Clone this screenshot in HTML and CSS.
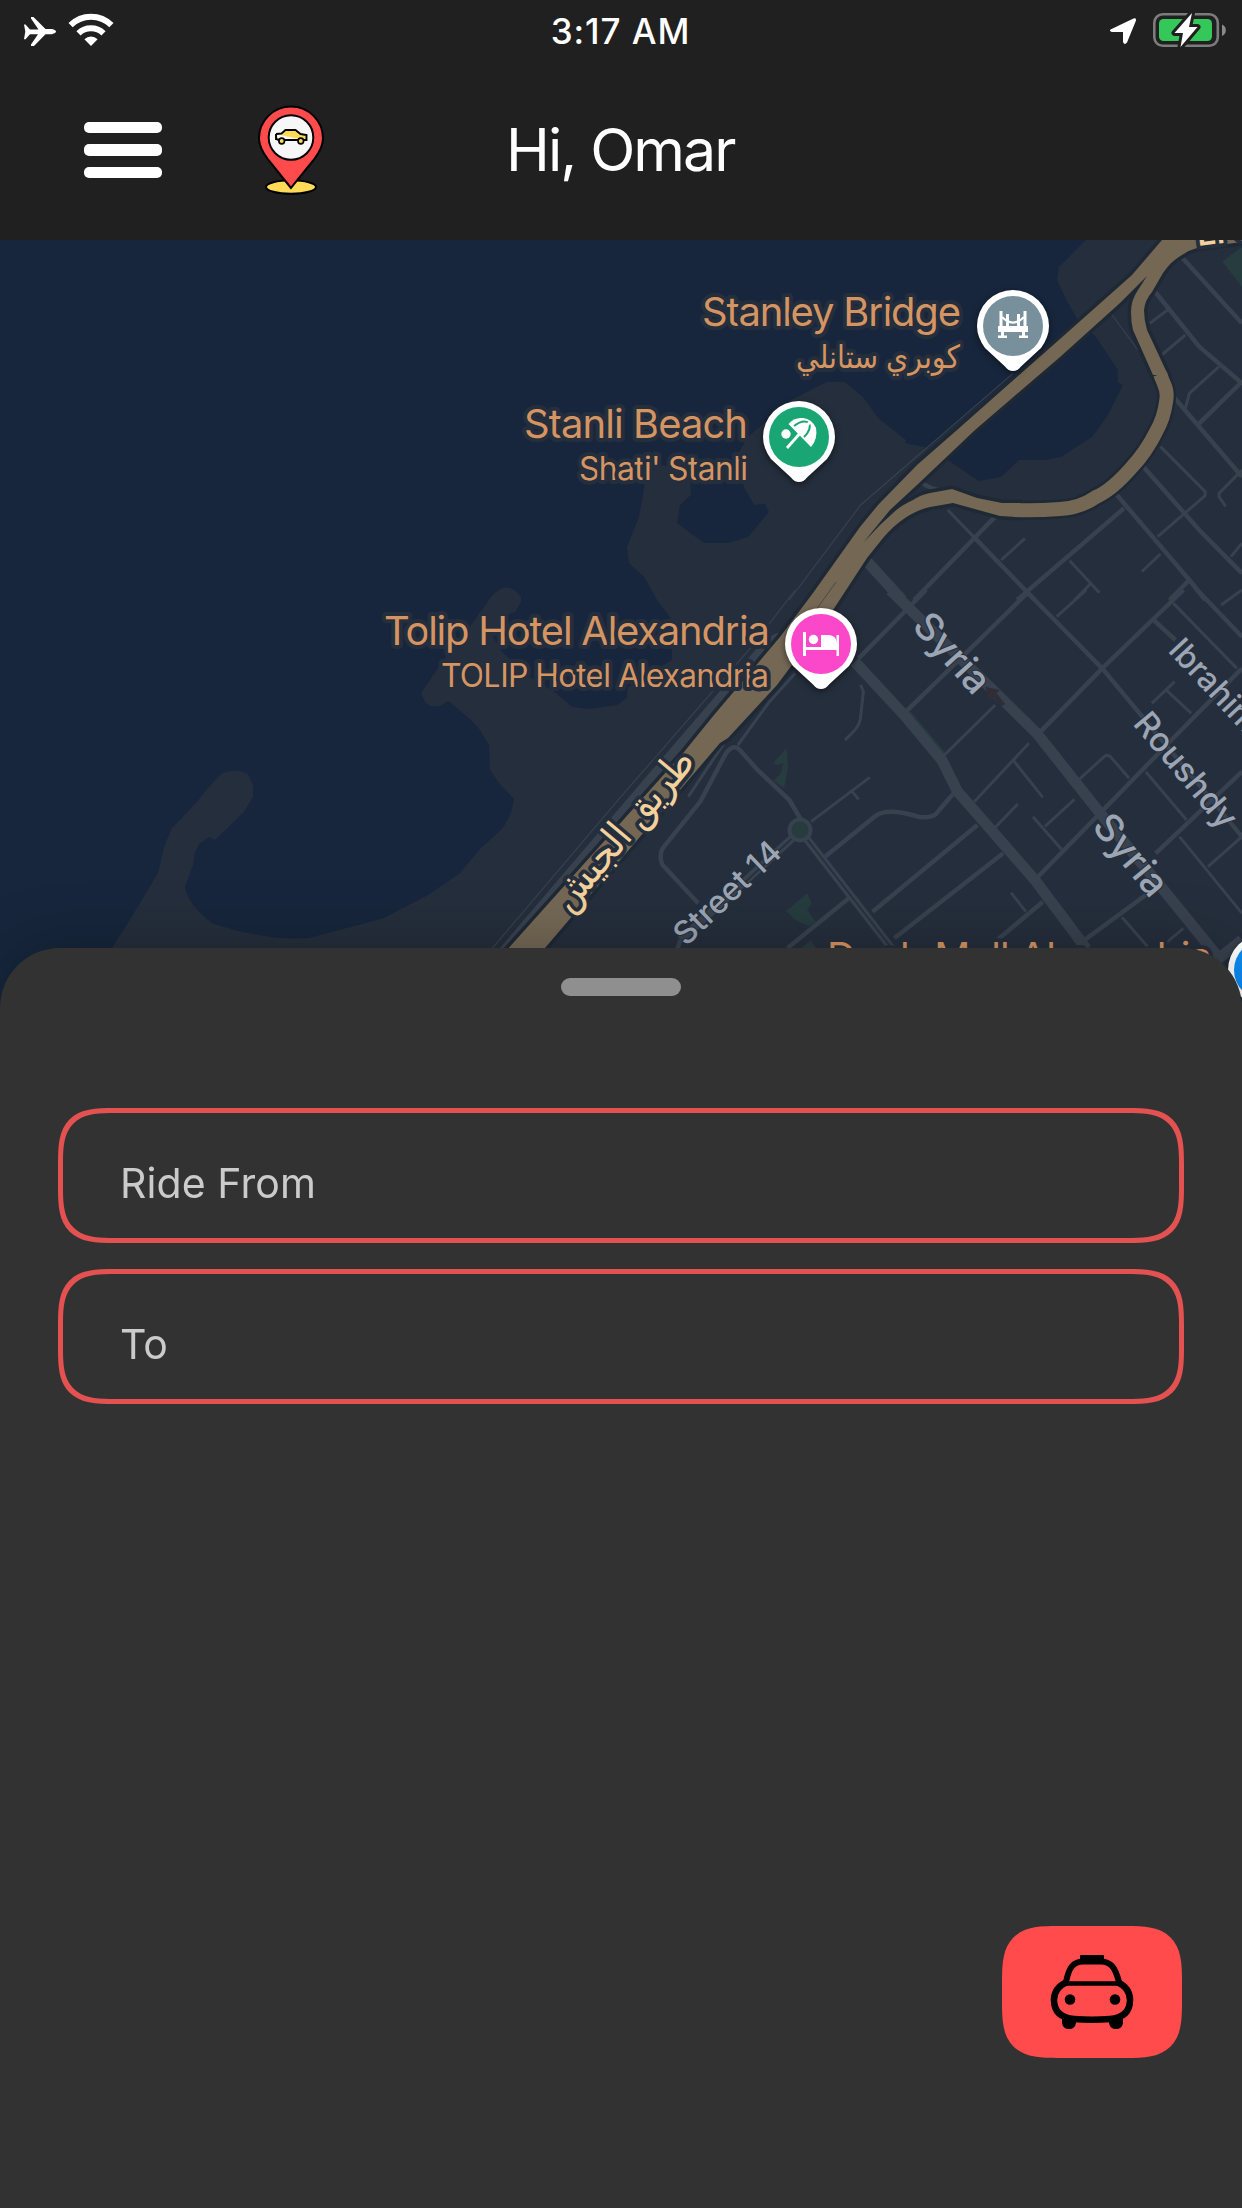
FILE: index.html
```html
<!DOCTYPE html>
<html lang="en">
<head>
<meta charset="utf-8">
<title>Ride</title>
<link rel="stylesheet" href="styles.css">
</head>
<body>
<div class="app">
  <header class="header">
    <div class="status">
      <svg class="status-left" width="90" height="36" viewBox="24 12 90 36" fill="#fff">
        <path d="M24 24.500h1.500l4.500 5h8.500L31 18.500V17h2.500l12 12H52q4 1 4 2.600T52 34.300h-6.500L34 46h-3v-1.500l7-10.200h-8l-4.500 5H24l1.300-7.700z"/>
        <path d="M91 46l-6.600-6.800a9.600 9.600 0 0 1 13.200 0z"/>
        <g fill="none" stroke="#fff" stroke-width="6">
          <path d="M78.500 33.300a18 18 0 0 1 25 0"/>
          <path d="M70.600 25.200a29 29 0 0 1 40.800 0"/>
        </g>
      </svg>
      <span class="clock">3:17 AM</span>
      <svg class="status-right" width="118" height="38" viewBox="1108 11 118 38">
        <path d="M1110.500 29.500l23-11q3-1 2.500 2l-9 22q-2.500 3-4-.5V32h-11q-3-1-1.500-2.500z" fill="#fff"/>
        <rect x="1154.300" y="14.300" width="63.500" height="31.500" rx="8.500" fill="none" stroke="#7c7c7c" stroke-width="2.600"/>
        <path d="M1222 24.500q3.800 1.500 3.800 5.700t-3.800 5.700z" fill="#8a8a8a"/>
        <rect x="1159" y="19" width="53" height="22" rx="4.500" fill="#34c759"/>
        <path d="M1192 13l-17.500 20h8.500l-2.500 14 17-20h-8.500z" fill="#fff" stroke="#202020" stroke-width="6" paint-order="stroke" stroke-linejoin="round"/>
      </svg>
    </div>
    <div class="topbar">
      <div class="burger"><i></i><i></i><i></i></div>
      <svg class="brand" width="68" height="92" viewBox="257 104 68 92">
        <ellipse cx="291" cy="187" rx="25" ry="6.800" fill="#ffdb57" stroke="#000" stroke-width="2"/>
        <path d="M291 188l-23-28.500C262 151.500 259 146 259 138.500a32 32 0 0 1 64 0c0 7.500-3 13-9 21z" fill="#ff4b4b" stroke="#000" stroke-width="2"/>
        <circle cx="291" cy="137.500" r="22.300" fill="#f7f7f7" stroke="#000" stroke-width="2"/>
        <path d="M276 134l5.500-.5 4-3.500h10l5 4 6 1v5h-2.500M299 140h-15M279 140l-3-1v-5" fill="#ffdb57" stroke="#000" stroke-width="1.900"/>
        <circle cx="281.700" cy="141" r="2.800" fill="#ffdb57" stroke="#000" stroke-width="1.700"/>
        <circle cx="300.800" cy="141" r="2.800" fill="#ffdb57" stroke="#000" stroke-width="1.700"/>
      </svg>
      <h1 class="greeting">Hi, Omar</h1>
    </div>
  </header>

  <section class="map">
    <svg class="map-canvas" width="1242" height="784" viewBox="0 240 1242 784">
      <defs>
        <g id="pin">
          <path d="M0 45q-4.500 0-8-4.500L-28 22Q-36 11-36 0A36 36 0 0 1 36 0Q36 11 28 22L8 40.500Q4.500 45 0 45z" fill="#fff"/>
        </g>
        <path id="trunk" d="M1162 232V240L1132 275L1060 339L957 430L917 465L878 505L860 527L813 593L780 637L714 715L684 752L540 913L480 980H518L545 948L720 743L728 738L777 685L833 610L867 558L883 538Q893 526 905 518Q917 510 930 507L953 503L1000 516L1020 517V503H1002L977 498L952 489L930 493Q920 495 913 500Q900 506 893 513L880 525L863 543L890 510L917 485L975 430L1060 357L1120 303L1147 276L1138 290Q1131 300 1131 312Q1131 322 1133 330L1153 375H1168L1147 330Q1144 320 1144 310Q1145 300 1152 292L1163 273Q1171 261 1182 255Q1189 250 1197 248L1242 242V232z"/>
      </defs>
      <path class="land" d="M112 948L131 918L158 873L164 847L172 828L196 803L208 788L222 773Q232 770 240 771L248 774L253 785V797L244 812L215 840L209 837L199 844L195 852L193 865L185 887Q188 905 212 923Q235 931 248 933Q280 940 309 938L362 924L384 918L428 895L459 874L481 848L503 828L511 813L514 799L499 783L490 770L489 745L480 730L471 720L451 703L448 701Q436 711 426 703L421 693L447 655L475 620L491 597Q507 578 521 597V602L515 612Q505 616 500 614L493 637L503 653L531 678L556 693L572 707L590 709L618 705L627 697L628 687L672 660V620L657 600L645 578L629 563L627 547L639 517L645 483L657 465L681 467L690 478L691 495L680 505L677 523L704 543H728L748 537L769 512L765 504L754 505L744 487L736 457L748 437L764 423L791 400L827 382H845L863 397L878 418L906 440L905 443L928 448L1078 320L1068 303L1057 280L1059 267L1086 240H1242V1024H80z"/>
      <path class="water" d="M935 462L948 460L958 467L979 481L1001 477L1019 460H1045L1061 457L1092 437L1108 415L1123 385L1118 382V370L1096 337L1092 333L1072 322z"/>

      <g class="tile" transform="translate(621 230) scale(.39605 .33333)">
        <path class="park" d="M1568 50L1518 95L1568 170z"/>
        <path class="path" d="M990 430L605 825L425 1110M1240 255L1305 360"/>
        <path class="lane" d="M1335 280L1380 240M1365 375L1425 315M1362 650L1475 785V797L1355 920M1568 720L1510 790V800L1527 830M825 840L890 920M960 990L1020 925M1133 992L1208 1088M1185 1062L1145 1110M1315 1025L1362 972M1540 980L1568 940M1510 410L1435 490L1425 535"/>
        <path class="street" d="M1415 80L1568 280M1345 180L1460 350L1568 460M1395 500L1568 740M1568 455L1460 580M1315 705L1460 900L1568 1030M1245 785L1435 1050L1475 1110M1270 835L1000 1110M945 860L740 1110M890 920L1045 1110M1435 1050L1385 1110M755 750Q765 775 840 790"/>
        <path class="avenue" d="M610 980L710 1110"/>
      </g>
      <g class="tile" transform="translate(621 590) scale(.39605 .33333)">
        <path class="park" d="M385 518L418 475L422 530L412 595L385 572L402 552L410 520L392 525zM720 372L732 365L820 490L805 497zM417 963L470 910L482 940L470 960L492 995L475 1008L440 990zM455 1075L480 1050L492 1075z"/>
        <path class="path" d="M440 0L330 170L0 620L-325 1075"/>
        <path class="lane" d="M1100 80L1175 0M1395 40L1555 235M1515 45L1568 0M1398 275L1340 340M1375 298L1440 370M945 345L808 505M1030 460L892 635M990 510L1065 622M1155 570L1220 500Q1228 492 1236 500L1283 565M1145 628L1070 710M1040 680L1112 778M945 712L1002 642M1325 545L1428 690M1410 740L1568 970M1568 740L1482 830M1265 982L1330 1070M1420 1015L1360 1075M985 908L1022 965M480 695L628 562M582 602L600 628M605 285L612 305L604 390Q600 415 565 450M440 250L375 335L295 465M260 460L170 620"/>
        <path class="street" d="M770 0L600 205M1025 10L715 370M1020 0L1215 235L1568 740M1420 0L1215 235L1055 430M1455 0L1568 140M1340 85L1400 150M1568 235L1390 450L1045 870M1568 545L1350 790M1325 915L1165 1055M1065 935L950 1050M900 705L635 965M965 790L690 1045M840 610L795 672Q780 686 750 680Q670 650 640 680L515 800M455 690L425 630L345 540L300 480Q285 460 265 490L200 635L105 775Q95 800 105 825L195 940M575 925L420 1075M150 1050L140 1085"/>
        <path class="avenue narrow" d="M468 745L690 1085M432 745L150 1050"/>
        <path class="seam" d="M468 745L690 1085M432 745L310 880"/>
        <path class="avenue" d="M680 0L930 290L1050 430L1210 670L1370 900L1510 1105L1568 1050M590 215L715 375L810 510L850 605L1045 870L1165 1060L1195 1110M410 140Q370 155 350 190L118 510L-288 1075L-320 1120"/>
        <path d="M920 290L956 300L948 310L970 342L960 350L940 322L928 332z" fill="#2f2e36"/>
      </g>
      <circle cx="800" cy="830" r="10.500" fill="#263c3f" stroke="#38414e" stroke-width="4"/>

      <g fill="none" stroke-linejoin="round">
        <use href="#trunk" class="casing" stroke-width="7"/>
        <path class="casing" d="M1160 375L1164 384Q1168 392 1166 402Q1164 418 1156 432Q1146 452 1132 467Q1112 490 1096 497Q1080 508 1060 509Q1035 511 1016 510" stroke-width="19"/>
        <use href="#trunk" fill="#746855"/>
        <path class="highway" d="M1160 374L1164 384Q1168 392 1166 402Q1164 418 1156 432Q1146 452 1132 467Q1112 490 1096 497Q1080 508 1060 509Q1035 511 1014 510" stroke-width="14"/>
        <path d="M836 582L816 610" stroke="#4d4941" stroke-width="1"/>
      </g>

      <g class="road-label">
        <text x="0" y="0" transform="translate(911 627) rotate(48)" font-size="38.500">Syria</text>
        <text x="0" y="0" transform="translate(1091 827) rotate(50.500)" font-size="38.500">Syria</text>
        <text x="0" y="0" transform="translate(1132 724) rotate(50)" font-size="33.500">Roushdy</text>
        <text x="0" y="0" transform="translate(1167 651) rotate(47)" font-size="32">Ibrahim</text>
        <text x="0" y="0" transform="translate(686 947) rotate(-43.500)" font-size="32">Street 14</text>
      </g>
      <g class="highway-label">
        <text class="arabic-road" x="0" y="0" transform="translate(633 838) rotate(-50)" font-size="40" text-anchor="middle" direction="rtl" textLength="198" lengthAdjust="spacingAndGlyphs">طريق الجيش</text>
        <text x="0" y="0" transform="translate(1198 246) rotate(-7)" font-size="32">El Gaish Rd</text>
      </g>
      <g class="poi-label" text-anchor="end">
        <text x="961" y="326" font-size="40" textLength="259">Stanley Bridge</text>
        <text x="796" y="368" font-size="32" direction="rtl" textLength="164" lengthAdjust="spacingAndGlyphs">كوبري ستانلي</text>
        <text x="748" y="438" font-size="40" textLength="224">Stanli Beach</text>
        <text x="748" y="480" font-size="32" textLength="169">Shati' Stanli</text>
        <text x="770" y="645" font-size="40" textLength="386">Tolip Hotel Alexandria</text>
        <text x="769" y="687" font-size="32" textLength="328">TOLIP Hotel Alexandria</text>
        <text x="1212" y="971" font-size="40" textLength="385">Deeb Mall Alexandria</text>
      </g>

      <g class="pins">
        <g transform="translate(1013 326)">
          <use href="#pin"/><circle r="30" fill="#78909c"/>
          <path d="M-12-15v16M12-15v16M-5.500-12V1M5.500-12V1" fill="none" stroke="#fff" stroke-width="3"/>
          <path d="M-11-9Q0 2 11-9" fill="none" stroke="#fff" stroke-width="2.200"/>
          <path d="M-15 0h30v6h-3v3.500h3v2.500H6V9.500h3V6H-9v3.500h3v2.500h-9V9.500h3V6h-3z" fill="#fff"/>
        </g>
        <g transform="translate(799 437)">
          <use href="#pin"/><circle r="30" fill="#1aa674"/>
          <g fill="#fff"><circle cx="-13" cy="-3" r="4.700"/><path d="M-10.500-13Q-5-20 4-19T17-9Q19 2 12 10z"/></g>
          <path d="M-5-11Q4-18 10-14Q13-8 5 0" fill="none" stroke="#1aa674" stroke-width="2"/>
          <path d="M-12 11L11-15" stroke="#fff" stroke-width="2.800"/>
        </g>
        <g transform="translate(821 644)">
          <use href="#pin"/><circle r="30" fill="#fb47ca"/>
          <g fill="#fff"><path d="M-18-12h3V3H0V-9h8q7.500 1 7.500 7V-9H18v21h-2.500V6H-15v6h-3z"/><circle cx="-7.500" cy="-4.500" r="4.700"/></g>
        </g>
        <g transform="translate(1264 970)"><use href="#pin"/><circle r="30" fill="#0b8cf5"/></g>
      </g>
    </svg>
  </section>

  <main class="sheet">
    <div class="handle"></div>
    <div class="fields">
      <div class="field">Ride From</div>
      <div class="field">To</div>
    </div>
    <button class="ride-button" aria-label="Request ride">
      <svg width="84" height="76" viewBox="0 0 84 76">
        <path d="M31 1h22q1 0 1 1v4H30V2q0-1 1-1z"/>
        <path d="M12 63h14v6q-1 6-7 6t-7-6zM59 63h14v6q-1 6-7 6t-7-6z"/>
        <g fill="none" stroke="#000">
          <path d="M16 28C19 13 23 8 33 7.500H51C61 8 65 13 69 28" stroke-width="6"/>
          <path d="M17 28C8 32 4 39 4 46C4 59 13 64 24 65Q42 66.500 60 65C71 64 80 59 80 46C80 39 76 32 67 28" stroke-width="6.500"/>
          <path d="M15 29.500H69" stroke-width="4.500"/>
        </g>
        <circle cx="20" cy="45.500" r="5.300"/><circle cx="65" cy="45.500" r="5.300"/>
      </svg>
    </button>
  </main>
</div>
</body>
</html>
```
FILE: styles.css
```css
* { box-sizing: border-box; }

body {
  margin: 0;
  background: #323232;
  font-family: Inter, "Liberation Sans", "DejaVu Sans", sans-serif;
}

.app {
  display: flex;
  flex-direction: column;
  width: 1242px;
  height: 2208px;
  overflow: hidden;
}

.header {
  flex: none;
  height: 240px;
  background: #202020;
  color: #fff;
}

.status {
  display: grid;
  grid-template-columns: 1fr auto 1fr;
  align-items: center;
  height: 60px;
  padding: 0 16px 0 24px;
}

.status-right { justify-self: end; }

.clock {
  margin-top: 2px;
  margin-right: 9px;
  font-size: 35px;
  font-weight: 500;
  letter-spacing: 0.9px;
  line-height: 40px;
}

.topbar {
  display: flex;
  align-items: center;
  height: 180px;
  padding: 0 84px;
}

.burger {
  display: grid;
  gap: 11px;
  width: 78px;
}

.burger i {
  height: 11.500px;
  border-radius: 5px;
  background: #fff;
}

.brand { margin-left: 95px; }

.greeting {
  margin: 0 0 0 181px;
  font-size: 59px;
  font-weight: 400;
  letter-spacing: -1.900px;
  line-height: 70px;
  white-space: nowrap;
}

.map {
  flex: none;
  height: 784px;
  background: #17263c;
}

.map-canvas { display: block; }
.land { fill: #252e3c; }
.water { fill: #17263c; }
.park { fill: #263c3f; }

.tile path { vector-effect: non-scaling-stroke; stroke-linejoin: round; }
.path { fill: none; stroke: #38414e; stroke-width: 1.2; }
.lane { fill: none; stroke: #38414e; stroke-width: 3; }
.street { fill: none; stroke: #38414e; stroke-width: 4.500; }
.avenue { fill: none; stroke: #38414e; stroke-width: 11; }
.avenue.narrow { stroke-width: 8; }
.seam { fill: none; stroke: #252e3c; stroke-width: 1.500; }
.casing { stroke: #1f2835; }
.highway { stroke: #746855; }

.road-label { fill: #9ca5b3; font-weight: 500; }
.highway-label { fill: #f3d19c; font-weight: 600; }
.highway-label .arabic-road { font-weight: 400; }
.poi-label { fill: #d59563; }

.road-label text,
.highway-label text,
.poi-label text {
  stroke: #252e3c;
  stroke-width: 8px;
  stroke-linejoin: round;
  paint-order: stroke;
}

.road-label text { stroke-width: 2px; }

.pins { filter: drop-shadow(0 2px 3px rgba(0, 0, 0, 0.5)); }

.sheet {
  position: relative;
  display: flex;
  flex: 1;
  flex-direction: column;
  margin-top: -76px;
  padding: 30px 58px 150px;
  border-radius: 60px 60px 0 0;
  background: #323232;
  box-shadow: 0 0 64px rgba(0, 0, 0, 0.25);
}

.handle {
  align-self: center;
  width: 120px;
  height: 18px;
  border-radius: 9px;
  background: #8f8f8f;
}

.fields {
  display: grid;
  gap: 26px;
  margin-top: 112px;
}

.field {
  height: 135px;
  padding: 45px 57px 0;
  border: 5px solid #e35151;
  border-radius: 44px;
  color: #cbcbcb;
  font-size: 41px;
  letter-spacing: 0.100px;
  line-height: 50px;
}

.ride-button {
  display: grid;
  place-items: center;
  align-self: flex-end;
  width: 180px;
  height: 132px;
  margin-top: auto;
  margin-right: 2px;
  padding: 0;
  border: 0;
  border-radius: 44px;
  background: #ff4b4b;
}

@supports (corner-shape: squircle) {
  .field,
  .ride-button {
    border-radius: 56px;
    corner-shape: superellipse(1.6);
  }
}
```
